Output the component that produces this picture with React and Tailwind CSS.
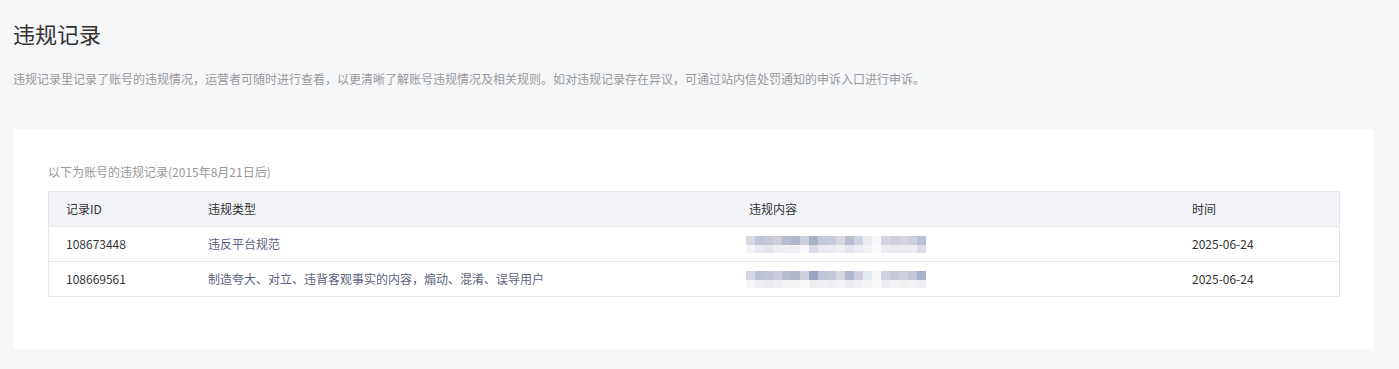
import React from 'react';

const font = { fontFamily: '"Noto Sans CJK SC", "Liberation Sans", sans-serif' };

const records = [
  { id: '108673448', type: '违反平台规范', time: '2025-06-24' },
  { id: '108669561', type: '制造夸大、对立、违背客观事实的内容，煽动、混淆、误导用户', time: '2025-06-24' },
];

// mosaic blocks standing in for the blurred content
const topA = ['#d8d8e0', '#c0c4d4', '#c4c8d8', '#cccdd9', '#b8bdd0', '#b0b6cc', '#ccd0dc', '#a8b0c8', '#c4c8d8', '#c8ccd9', '#d8d8e0', '#b8bed0', '#d0d2dd', '#e8ecf0', '#f8f8f8', '#d4d6e0', '#d0d0dc', '#d4d4de', '#cdd0dc', '#b8c0d4'];
const botA = ['#f4f4f6', '#e8eaf0', '#e4e6ee', '#eeeef2', '#f0f0f4', '#f0f0f4', '#fafafa', '#d8dce8', '#eaeaf0', '#ececf2', '#f0f0f2', '#e4e6ee', '#ececf2', '#f2f2f4', '#fafafa', '#eeeef2', '#ebebf0', '#ececf0', '#eeeef2', '#dcdee8'];
const topB = ['#d8d8e0', '#bcc2d4', '#c0c6d6', '#c8cad8', '#b8bcd0', '#b0b6cc', '#ccd0dc', '#98a4c0', '#c0c6d6', '#c4c8d6', '#d8d8e0', '#b0b8cc', '#d0d0dc', '#e4e8f0', '#f8f8f8', '#d0d2de', '#c8c8d6', '#d0d0dc', '#c4c8d6', '#a8b2cc'];
const botB = ['#f6f6f8', '#eceef2', '#e8eaf0', '#eeeef2', '#f2f2f4', '#f2f2f4', '#fafafa', '#eeeef2', '#f0f0f4', '#eeeef2', '#f2f2f4', '#ececf0', '#f0f0f2', '#f4f4f6', '#fafafa', '#eeeef2', '#f2f2f4', '#f0f0f2', '#f2f2f4', '#f0f0f4'];

function Mosaic({ top, bottom }) {
  return (
    <div className="flex flex-col">
      <div className="flex">
        {top.map((c, i) => <div key={i} className="w-[9px] h-[9px]" style={{ backgroundColor: c }} />)}
      </div>
      <div className="flex">
        {bottom.map((c, i) => <div key={i} className="w-[9px] h-[8px]" style={{ backgroundColor: c }} />)}
      </div>
    </div>
  );
}

export default function App() {
  return (
    <div className="min-h-[369px] bg-[#f6f7f9] pl-[13px] pr-[25px] pt-[18px] pb-[20px]" style={font}>
      <h1 className="text-[22px] leading-[30px] font-normal text-[#333]">违规记录</h1>
      <p className="mt-[22px] text-[12px] leading-[18px] text-[#999]">
        违规记录里记录了账号的违规情况，运营者可随时进行查看，以更清晰了解账号违规情况及相关规则。如对违规记录存在异议，可通过站内信处罚通知的申诉入口进行申诉。
      </p>
      <div className="mt-[41px] ml-px bg-white rounded-[2px] px-[34px] pt-[34px] pb-[52px]">
        <div className="text-[12px] leading-[18px] text-[#999] mb-[10px]">以下为账号的违规记录(2015年8月21日后)</div>
        <div className="border border-[#e4e6eb] text-[12px] text-[#333]">
          <div className="flex items-center h-[34px] bg-[#f2f3f7]">
            <div className="w-[142px] pl-[17px]">记录ID</div>
            <div className="w-[541px] pl-[17px]">违规类型</div>
            <div className="w-[443px] pl-[17px]">违规内容</div>
            <div className="flex-1 pl-[17px]">时间</div>
          </div>
          {records.map((r) => (
            <div key={r.id} className="flex items-center h-[35px] border-t border-[#e4e6eb]">
              <div className="w-[142px] pl-[17px]">{r.id}</div>
              <div className="w-[541px] pl-[17px] text-[#5c6280]">{r.type}</div>
              <div className="w-[443px] pl-[14px]">
                <Mosaic top={r.id === '108673448' ? topA : topB} bottom={r.id === '108673448' ? botA : botB} />
              </div>
              <div className="flex-1 pl-[17px]">{r.time}</div>
            </div>
          ))}
        </div>
      </div>
    </div>
  );
}
